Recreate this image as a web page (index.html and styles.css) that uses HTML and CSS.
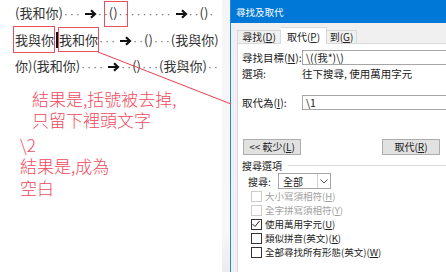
FILE: index.html
```html
<!DOCTYPE html>
<html lang="zh-Hant">
<head>
    <meta charset="UTF-8">
    <title>尋找及取代</title>
    <meta name="viewport" content="width=device-width, initial-scale=1.0">
    <link rel="stylesheet" href="styles.css">
</head>
<body>
    <div class="doc">
        <div class="lines">
            <div class="line">(我和你)<span class="d">·</span><span class="d">·</span><span class="d">·</span><span class="tb"><svg width="13" height="10" viewBox="0 0 13 10"><path d="M1 5H11M7 1.2L11 5L7 8.8" fill="none" stroke="#111" stroke-width="2.2"/></svg></span><span class="d">·</span><span class="d">·</span>()<span class="d">·</span><span class="d">·</span><span class="d">·</span><span class="d">·</span><span class="d">·</span><span class="d">·</span><span class="d">·</span><span class="d">·</span><span class="d">·</span><span class="tb"><svg width="13" height="10" viewBox="0 0 13 10"><path d="M1 5H11M7 1.2L11 5L7 8.8" fill="none" stroke="#111" stroke-width="2.2"/></svg></span><span class="d">·</span><span class="d">·</span>()<span class="d">·</span></div>
            <div class="line">我與你<span class="caret"></span>我和你<span class="d">·</span><span class="d">·</span><span class="d">·</span><span class="tb"><svg width="13" height="10" viewBox="0 0 13 10"><path d="M1 5H11M7 1.2L11 5L7 8.8" fill="none" stroke="#111" stroke-width="2.2"/></svg></span><span class="d">·</span><span class="d">·</span>()<span class="d">·</span><span class="d">·</span><span class="d">·</span>(我與你)</div>
            <div class="line">你)(我和你)<span class="d">·</span><span class="d">·</span><span class="d">·</span><span class="d">·</span><span class="tb"><svg width="13" height="10" viewBox="0 0 13 10"><path d="M1 5H11M7 1.2L11 5L7 8.8" fill="none" stroke="#111" stroke-width="2.2"/></svg></span><span class="d">·</span><span class="d">·</span>()<span class="d">·</span><span class="d">·</span><span class="d">·</span>(我與你)<span class="d">·</span><span class="d">·</span></div>
        </div>
        <div class="note note-a">結果是,括號被去掉,<br>只留下裡頭文字</div>
        <div class="note note-b">\2<br>結果是,成為<br>空白</div>
    </div>
    <div class="edge"></div>
    <div class="dialog">
        <div class="titlebar">尋找及取代</div>
        <div class="tabs">
            <div class="tab">尋找(<u>D</u>)</div>
            <div class="tab active">取代(<u>P</u>)</div>
            <div class="tab short">到(<u>G</u>)</div>
        </div>
        <div class="panel">
            <div class="field">
                <label class="lbl">尋找目標(<u>N</u>):</label>
                <div class="input">\((我*)\)</div>
            </div>
            <div class="field opts">
                <span class="lbl">選項:</span>
                <span>往下搜尋, 使用萬用字元</span>
            </div>
            <div class="field repl">
                <label class="lbl">取代為(<u>I</u>):</label>
                <div class="input">\1</div>
            </div>
            <div class="buttons">
                <button>&lt;&lt; 較少(<u>L</u>)</button>
                <button>取代(<u>R</u>)</button>
            </div>
            <div class="group">搜尋選項</div>
            <div class="search-row">
                <span class="search-lbl">搜尋:</span>
                <div class="select">
                    <span class="sel-val">全部</span>
                    <span class="sel-arrow"><svg width="8" height="5" viewBox="0 0 8 5"><path d="M0.5 0.5L4 4L7.5 0.5" fill="none" stroke="#555" stroke-width="1"/></svg></span>
                </div>
            </div>
            <div class="check disabled"><span class="box"></span>大小寫須相符(<u>H</u>)</div>
            <div class="check disabled"><span class="box"></span>全字拼寫須相符(<u>Y</u>)</div>
            <div class="check"><span class="box"><svg width="10" height="10" viewBox="0 0 10 10"><path d="M1.5 5L4 7.5L8.5 2" fill="none" stroke="#222" stroke-width="1"/></svg></span>使用萬用字元(<u>U</u>)</div>
            <div class="check"><span class="box"></span>類似拼音(英文)(<u>K</u>)</div>
            <div class="check"><span class="box"></span>全部尋找所有形態(英文)(<u>W</u>)</div>
        </div>
    </div>
    <svg class="marks" width="446" height="272" viewBox="0 0 446 272">
        <rect x="104.5" y="1.5" width="23" height="25" fill="none" stroke="#e8505f" stroke-width="1"/>
        <rect x="13.5" y="26.5" width="41" height="26" fill="none" stroke="#e8505f" stroke-width="1"/>
        <rect x="58.5" y="27.5" width="40" height="24" fill="none" stroke="#e8505f" stroke-width="1"/>
        <line x1="98" y1="52" x2="231" y2="104" stroke="#e8404f" stroke-width="1"/>
    </svg>
</body>
</html>
```

FILE: styles.css
```css
body {
    margin: 0;
    width: 446px;
    height: 272px;
    overflow: hidden;
    display: flex;
    position: relative;
    background: #fff;
    font-family: "Noto Sans CJK TC", "Noto Sans", sans-serif;
}
.doc {
    width: 222px;
    flex: none;
}
.lines {
    padding: 1px 0 0 15px;
    font-size: 13px;
    line-height: 24.5px;
    color: #333;
    white-space: nowrap;
}
.d {
    display: inline-block;
    width: 6px;
    text-align: center;
    font-family: "DejaVu Sans", sans-serif;
    font-size: 10px;
    color: #555;
}
.tb {
    display: inline-block;
    width: 16px;
}
.tb svg {
    margin-left: 3px;
    vertical-align: -1px;
}
.caret {
    display: inline-block;
    width: 2px;
    height: 16px;
    background: #111;
    margin: 0 1px 0 2px;
    vertical-align: -3px;
}
.note {
    color: #ef4a5e;
    font-size: 17px;
    font-weight: 300;
    white-space: nowrap;
}
.note-a {
    margin-top: 7px;
    padding-left: 32px;
    line-height: 21px;
}
.note-b {
    margin-top: 4px;
    padding-left: 20px;
    line-height: 21.5px;
}
.edge {
    width: 8px;
    flex: none;
    background: linear-gradient(180deg, #f5f5f5 0%, #f7f7f7 85%, #ececec 100%);
}
.dialog {
    flex: 1;
    min-width: 0;
    border-left: 1px solid #2b88d8;
    background: #f0f0f0;
    display: flex;
    flex-direction: column;
    overflow: hidden;
}
.titlebar {
    height: 23px;
    flex: none;
    background: #0078d7;
    color: #fff;
    font-size: 9.5px;
    line-height: 24px;
    padding-left: 5px;
}
.tabs {
    height: 20px;
    flex: none;
    display: flex;
    align-items: flex-end;
    padding-left: 6px;
    font-size: 10px;
    color: #222;
    position: relative;
    z-index: 1;
}
.tab {
    width: 42px;
    height: 12px;
    line-height: 12px;
    text-align: center;
    border: 1px solid #d9d9d9;
    border-bottom: none;
    background: #f0f0f0;
}
.tab.active {
    width: 45px;
    height: 16px;
    line-height: 17px;
    background: #fff;
    border-left: none;
    margin-bottom: -1px;
}
.tab.short {
    width: 29px;
    border-left: none;
}
.panel {
    flex: 1;
    margin-left: 6px;
    background: #fff;
    border-top: 1px solid #d9d9d9;
    border-left: 1px solid #d9d9d9;
    padding: 6px 0 0 4px;
    font-size: 10.5px;
    color: #222;
    white-space: nowrap;
}
.field {
    display: flex;
    align-items: center;
    height: 15px;
}
.lbl {
    width: 60px;
    flex: none;
}
.input {
    flex: 1;
    height: 13px;
    line-height: 13px;
    border: 1px solid #a6a6a6;
    border-right: none;
    padding-left: 3px;
    font-size: 10.5px;
}
.opts {
    margin-top: 1px;
    height: 14px;
}
.repl {
    margin-top: 15px;
}
.buttons {
    display: flex;
    gap: 81px;
    margin: 29px 0 0 1px;
}
button {
    width: 58px;
    height: 16px;
    padding: 0;
    font-family: inherit;
    font-size: 10px;
    line-height: 14px;
    color: #222;
    background: #e1e1e1;
    border: 1px solid #adadad;
}
.group {
    display: flex;
    align-items: center;
    margin-top: 4px;
    height: 12px;
    font-size: 10px;
}
.group::after {
    content: "";
    flex: 1;
    border-top: 1px solid #dcdcdc;
    margin-left: 6px;
}
.search-row {
    display: flex;
    align-items: center;
    margin: 2px 0 0 6px;
    height: 16px;
    font-size: 10px;
}
.search-lbl {
    width: 30px;
}
.select {
    width: 51px;
    height: 14px;
    border: 1px solid #a6a6a6;
    display: flex;
    align-items: center;
}
.sel-val {
    flex: 1;
    padding-left: 4px;
}
.sel-arrow {
    width: 12px;
    height: 14px;
    border-left: 1px solid #d0d0d0;
    display: flex;
    align-items: center;
    justify-content: center;
}
.check {
    display: flex;
    align-items: center;
    height: 14px;
    margin-left: 9px;
    font-size: 9.5px;
    color: #222;
}
.check:first-of-type {
    margin-top: 3px;
}
.box {
    width: 9px;
    height: 9px;
    border: 1px solid #333;
    margin-right: 3px;
    display: flex;
}
.box svg {
    margin: -1px 0 0 -1px;
    width: 10px;
    height: 10px;
}
.check.disabled {
    color: #a0a0a0;
}
.check.disabled .box {
    border-color: #cccccc;
}
.marks {
    position: absolute;
    left: 0;
    top: 0;
    pointer-events: none;
}
```
